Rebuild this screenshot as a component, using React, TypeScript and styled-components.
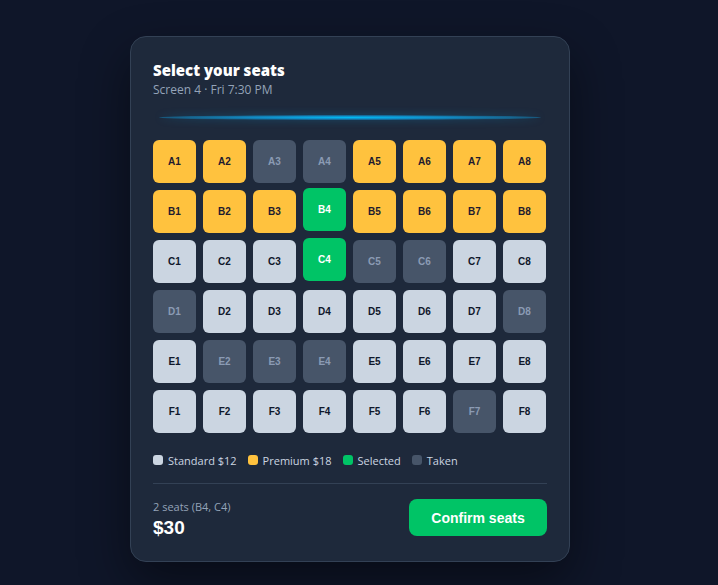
import React from 'react';
import styled, { createGlobalStyle } from 'styled-components';

type SeatKind = 'standard' | 'premium' | 'selected' | 'taken';

const GlobalStyle = createGlobalStyle`
  html, body {
    margin: 0;
    padding: 0;
    background: #0f1629;
  }
  body {
    font-family: "Open Sans", "Noto Sans", sans-serif;
  }
`;

const Page = styled.div`
  min-height: 585px;
  display: flex;
  justify-content: center;
  padding: 36px 18px 0 0;
  box-sizing: border-box;
`;

const Card = styled.div`
  width: 440px;
  height: 526px;
  box-sizing: border-box;
  background: #1e293b;
  border: 1px solid #334155;
  border-radius: 16px;
  padding: 23px 22px 0;
  box-shadow: 0 20px 50px rgba(0, 0, 0, 0.45);
  display: flex;
  flex-direction: column;
`;

const Title = styled.h2`
  margin: 0;
  font-size: 15px;
  line-height: 21px;
  font-weight: 800;
  color: #ffffff;
`;

const Subtitle = styled.div`
  font-size: 12px;
  line-height: 16px;
  color: #94a3b8;
  margin-top: 1px;
`;

const ScreenGlow = styled.div`
  height: 5px;
  margin: 17px 6px 20px;
  border-radius: 50%;
  background: radial-gradient(ellipse at center, #00bbf2 0%, rgba(14, 165, 233, 0.8) 35%, rgba(14, 165, 233, 0.25) 80%, rgba(14, 165, 233, 0) 100%);
  box-shadow: 0 0 8px rgba(14, 165, 233, 0.3);
`;

const Grid = styled.div`
  display: grid;
  grid-template-columns: repeat(8, 43px);
  grid-auto-rows: 43px;
  gap: 7px;
`;

const seatColors: Record<SeatKind, { bg: string; fg: string }> = {
  standard: { bg: '#cbd5e1', fg: '#0f172a' },
  premium: { bg: '#ffc23e', fg: '#1e1b2e' },
  selected: { bg: '#00c466', fg: '#ffffff' },
  taken: { bg: '#475569', fg: '#8b9bb4' },
};

const Seat = styled.div<{ $kind: SeatKind }>`
  border-radius: 6px;
  background: ${(p) => seatColors[p.$kind].bg};
  color: ${(p) => seatColors[p.$kind].fg};
  font-family: "Liberation Sans", Arial, sans-serif;
  font-size: 10px;
  font-weight: 700;
  display: flex;
  align-items: center;
  justify-content: center;
  transform: ${(p) => (p.$kind === 'selected' ? 'translateY(-2px)' : 'none')};
`;

const Legend = styled.div`
  display: flex;
  align-items: center;
  gap: 11px;
  margin-top: 19px;
  height: 16px;
`;

const LegendItem = styled.div`
  display: flex;
  align-items: center;
  gap: 5px;
  font-size: 11px;
  color: #cbd5e1;
`;

const Swatch = styled.span<{ $color: string }>`
  width: 10px;
  height: 10px;
  border-radius: 3px;
  background: ${(p) => p.$color};
`;

const Divider = styled.div`
  height: 1px;
  background: #334155;
  margin-top: 15px;
`;

const Footer = styled.div`
  display: flex;
  align-items: flex-start;
  justify-content: space-between;
  padding-top: 15px;
`;

const Summary = styled.div`
  display: flex;
  flex-direction: column;
`;

const SeatCount = styled.div`
  font-size: 11px;
  line-height: 16px;
  color: #94a3b8;
`;

const Total = styled.div`
  font-family: "Liberation Sans", Arial, sans-serif;
  font-size: 19px;
  line-height: 24px;
  font-weight: 700;
  color: #ffffff;
  margin-top: 1px;
`;

const ConfirmButton = styled.button`
  width: 138px;
  height: 37px;
  border: none;
  border-radius: 8px;
  background: #00c466;
  color: #ffffff;
  font-family: "Liberation Sans", Arial, sans-serif;
  font-size: 14px;
  font-weight: 700;
  cursor: pointer;
`;

const rows: { row: string; kinds: SeatKind[] }[] = [
  { row: 'A', kinds: ['premium', 'premium', 'taken', 'taken', 'premium', 'premium', 'premium', 'premium'] },
  { row: 'B', kinds: ['premium', 'premium', 'premium', 'selected', 'premium', 'premium', 'premium', 'premium'] },
  { row: 'C', kinds: ['standard', 'standard', 'standard', 'selected', 'taken', 'taken', 'standard', 'standard'] },
  { row: 'D', kinds: ['taken', 'standard', 'standard', 'standard', 'standard', 'standard', 'standard', 'taken'] },
  { row: 'E', kinds: ['standard', 'taken', 'taken', 'taken', 'standard', 'standard', 'standard', 'standard'] },
  { row: 'F', kinds: ['standard', 'standard', 'standard', 'standard', 'standard', 'standard', 'taken', 'standard'] },
];

const legend: { label: string; color: string }[] = [
  { label: 'Standard $12', color: '#cbd5e1' },
  { label: 'Premium $18', color: '#ffc23e' },
  { label: 'Selected', color: '#00c466' },
  { label: 'Taken', color: '#475569' },
];

const App: React.FC = () => {
  return (
    <Page>
      <GlobalStyle />
      <Card>
        <Title>Select your seats</Title>
        <Subtitle>Screen 4 · Fri 7:30 PM</Subtitle>
        <ScreenGlow />
        <Grid>
          {rows.map(({ row, kinds }) =>
            kinds.map((kind, i) => (
              <Seat key={`${row}${i + 1}`} $kind={kind}>
                {row}
                {i + 1}
              </Seat>
            ))
          )}
        </Grid>
        <Legend>
          {legend.map((l) => (
            <LegendItem key={l.label}>
              <Swatch $color={l.color} />
              {l.label}
            </LegendItem>
          ))}
        </Legend>
        <Divider />
        <Footer>
          <Summary>
            <SeatCount>2 seats (B4, C4)</SeatCount>
            <Total>$30</Total>
          </Summary>
          <ConfirmButton>Confirm seats</ConfirmButton>
        </Footer>
      </Card>
    </Page>
  );
};

export default App;
